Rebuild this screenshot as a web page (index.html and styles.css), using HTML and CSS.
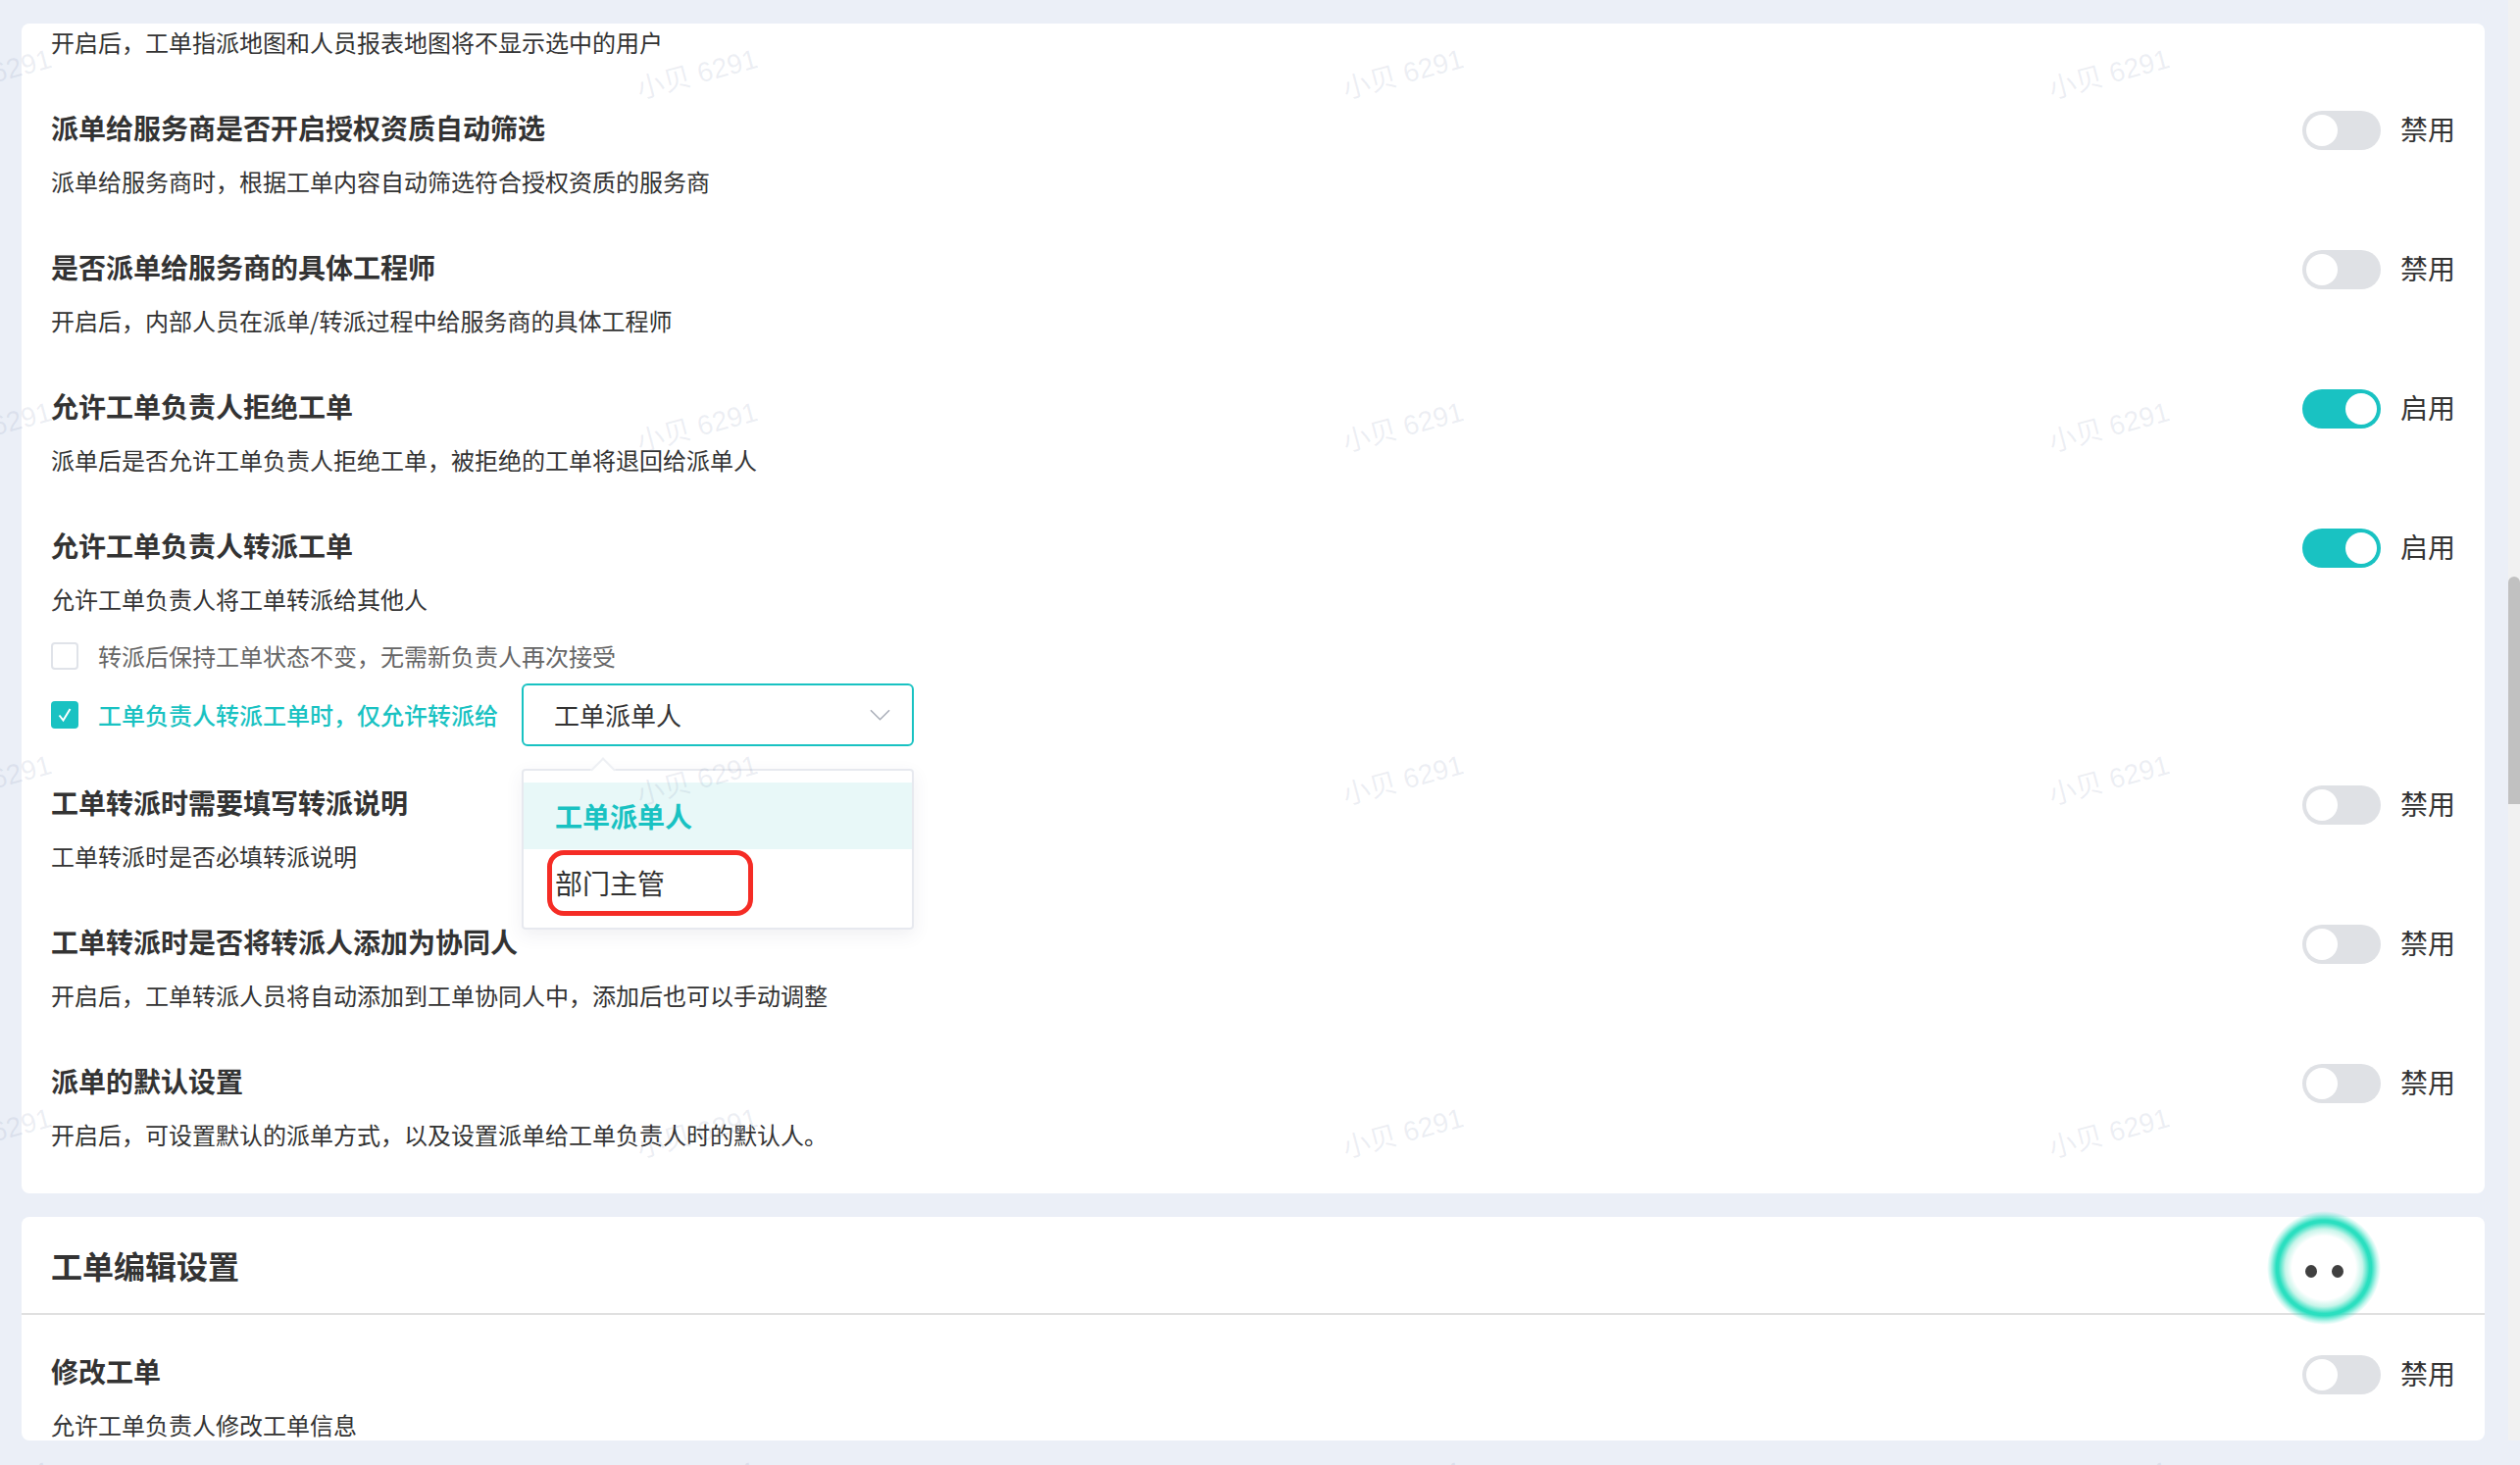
FILE: index.html
```html
<!DOCTYPE html>
<html lang="zh-CN">
<head>
<meta charset="utf-8">
<title>工单设置</title>
<link rel="stylesheet" href="styles.css">
</head>
<body>
<div class="page">
  <main class="content">
    <section class="card card-main">
      <p class="desc lead">开启后，工单指派地图和人员报表地图将不显示选中的用户</p>

      <div class="setting">
        <div class="setting-text">
          <h3 class="title">派单给服务商是否开启授权资质自动筛选</h3>
          <p class="desc">派单给服务商时，根据工单内容自动筛选符合授权资质的服务商</p>
        </div>
        <div class="control"><span class="toggle"></span><span class="state">禁用</span></div>
      </div>

      <div class="setting">
        <div class="setting-text">
          <h3 class="title">是否派单给服务商的具体工程师</h3>
          <p class="desc">开启后，内部人员在派单/转派过程中给服务商的具体工程师</p>
        </div>
        <div class="control"><span class="toggle"></span><span class="state">禁用</span></div>
      </div>

      <div class="setting">
        <div class="setting-text">
          <h3 class="title">允许工单负责人拒绝工单</h3>
          <p class="desc">派单后是否允许工单负责人拒绝工单，被拒绝的工单将退回给派单人</p>
        </div>
        <div class="control"><span class="toggle on"></span><span class="state">启用</span></div>
      </div>

      <div class="setting has-options">
        <div class="setting-text">
          <h3 class="title">允许工单负责人转派工单</h3>
          <p class="desc">允许工单负责人将工单转派给其他人</p>
          <div class="options">
            <div class="option">
              <span class="checkbox"></span>
              <span class="option-label">转派后保持工单状态不变，无需新负责人再次接受</span>
            </div>
            <div class="option option-active">
              <span class="checkbox checked">
                <svg class="check-icon" viewBox="0 0 28 28" aria-hidden="true"><path d="M8.5 14.5l4 5 7-11.5"/></svg>
              </span>
              <span class="option-label">工单负责人转派工单时，仅允许转派给</span>
              <div class="select">
                <span>工单派单人</span>
                <svg class="chevron" viewBox="0 0 22 12" aria-hidden="true"><path d="M1 1l10 10L21 1"/></svg>
                <div class="dropdown">
                  <span class="dropdown-arrow"></span>
                  <div class="dropdown-item selected">工单派单人</div>
                  <div class="dropdown-item">部门主管<span class="annotation"></span></div>
                </div>
              </div>
            </div>
          </div>
        </div>
        <div class="control"><span class="toggle on"></span><span class="state">启用</span></div>
      </div>

      <div class="setting">
        <div class="setting-text">
          <h3 class="title">工单转派时需要填写转派说明</h3>
          <p class="desc">工单转派时是否必填转派说明</p>
        </div>
        <div class="control"><span class="toggle"></span><span class="state">禁用</span></div>
      </div>

      <div class="setting">
        <div class="setting-text">
          <h3 class="title">工单转派时是否将转派人添加为协同人</h3>
          <p class="desc">开启后，工单转派人员将自动添加到工单协同人中，添加后也可以手动调整</p>
        </div>
        <div class="control"><span class="toggle"></span><span class="state">禁用</span></div>
      </div>

      <div class="setting last">
        <div class="setting-text">
          <h3 class="title">派单的默认设置</h3>
          <p class="desc">开启后，可设置默认的派单方式，以及设置派单给工单负责人时的默认人。</p>
        </div>
        <div class="control"><span class="toggle"></span><span class="state">禁用</span></div>
      </div>
    </section>

    <section class="card card-edit">
      <h2 class="section-title">工单编辑设置</h2>
      <div class="setting first">
        <div class="setting-text">
          <h3 class="title">修改工单</h3>
          <p class="desc">允许工单负责人修改工单信息</p>
        </div>
        <div class="control"><span class="toggle"></span><span class="state">禁用</span></div>
      </div>
    </section>
  </main>
  <div class="scrollbar"><div class="scrollbar-thumb"></div></div>
</div>

<div class="assistant"><span class="eye"></span><span class="eye"></span></div>

<div class="watermark-layer" aria-hidden="true">
  <div class="watermarks">
    <span class="wm">小贝 6291</span><span class="wm">小贝 6291</span><span class="wm">小贝 6291</span><span class="wm">小贝 6291</span>
    <span class="wm">小贝 6291</span><span class="wm">小贝 6291</span><span class="wm">小贝 6291</span><span class="wm">小贝 6291</span>
    <span class="wm">小贝 6291</span><span class="wm">小贝 6291</span><span class="wm">小贝 6291</span><span class="wm">小贝 6291</span>
    <span class="wm">小贝 6291</span><span class="wm">小贝 6291</span><span class="wm">小贝 6291</span><span class="wm">小贝 6291</span>
    <span class="wm">小贝 6291</span><span class="wm">小贝 6291</span><span class="wm">小贝 6291</span><span class="wm">小贝 6291</span>
  </div>
</div>
</body>
</html>
```
FILE: styles.css
```css
* { box-sizing: border-box; }

html, body {
  margin: 0;
  height: 1494px;
  overflow: hidden;
}

body {
  position: relative;
  background: #ebeff7;
  color: #333;
  font-family: "Noto Sans CJK SC", "Noto Sans", sans-serif;
}

h2, h3, p { margin: 0; }

.page {
  display: flex;
  height: 1469px;
}

.content {
  flex: 1;
  display: flex;
  flex-direction: column;
  gap: 24px;
  padding: 24px 24px 0 22px;
  min-width: 0;
}

.card {
  background: #fff;
  border-radius: 8px;
}

.card-main {
  height: 1193px;
  padding: 2px 30px 0;
}

.card-edit {
  height: 228px;
  overflow: hidden;
}

.lead { margin-bottom: 50px; }

.setting {
  display: flex;
  justify-content: space-between;
  align-items: flex-start;
  margin-bottom: 50px;
}

.setting.has-options { margin-bottom: 37px; }
.setting.last { margin-bottom: 0; }

.setting.first {
  padding: 37px 30px 0;
  margin-bottom: 0;
}

.title {
  font-size: 28px;
  line-height: 40px;
  font-weight: 700;
  color: #333;
}

.desc {
  font-size: 24px;
  line-height: 34px;
  font-weight: 400;
  color: #333;
}

.title + .desc { margin-top: 18px; }

.section-title {
  height: 100px;
  padding-left: 30px;
  border-bottom: 2px solid #e0e0e0;
  font-size: 32px;
  line-height: 98px;
  font-weight: 700;
  color: #333;
}

.control {
  display: flex;
  align-items: flex-start;
  gap: 20px;
  margin-top: 3px;
}

.setting.first .control { margin-top: 4px; }

.state {
  margin-top: -2px;
  font-size: 28px;
  line-height: 40px;
  color: #333;
}

.toggle {
  display: block;
  width: 80px;
  height: 40px;
  padding: 4px;
  border-radius: 20px;
  background: #dfe1e5;
}

.toggle::after {
  content: "";
  display: block;
  width: 32px;
  height: 32px;
  border-radius: 50%;
  background: #fff;
}

.toggle.on {
  padding-left: 44px;
  background: #19c2c2;
}

.options {
  display: flex;
  flex-direction: column;
  margin-top: 24px;
  gap: 11px;
}

.option {
  display: flex;
  align-items: center;
  font-size: 24px;
  line-height: 34px;
  color: #666;
}

.option-active {
  color: #19c2c2;
  font-weight: 500;
}

.checkbox {
  flex: none;
  width: 28px;
  height: 28px;
  margin-right: 20px;
  border: 2px solid #e0e3e9;
  border-radius: 4px;
  background: #fff;
}

.checkbox.checked {
  border: 0;
  background: #19c2c2;
}

.check-icon {
  display: block;
  width: 28px;
  height: 28px;
  fill: none;
  stroke: #fff;
  stroke-width: 2;
}

.select {
  position: relative;
  display: flex;
  justify-content: space-between;
  align-items: center;
  width: 400px;
  height: 64px;
  margin-left: 24px;
  padding: 0 22px 0 31px;
  border: 2px solid #19c2c2;
  border-radius: 6px;
  background: #fff;
  font-size: 26px;
  font-weight: 400;
  color: #333;
}

.chevron {
  width: 21px;
  height: 12px;
  fill: none;
  stroke: #a9aeb8;
  stroke-width: 1.6;
}

.dropdown {
  position: absolute;
  z-index: 5;
  left: -2px;
  top: 85px;
  width: 400px;
  height: 164px;
  padding: 12px 0;
  border: 2px solid #e7e9ef;
  border-radius: 4px;
  background: #fff;
  box-shadow: 0 6px 18px rgba(60, 70, 100, 0.08);
}

.dropdown-arrow {
  position: absolute;
  left: 72px;
  top: -10px;
  width: 18px;
  height: 18px;
  background: #fff;
  transform: rotate(45deg);
  border-top: 2px solid #eef0f4;
  border-left: 2px solid #eef0f4;
}

.dropdown-item {
  position: relative;
  height: 68px;
  padding-left: 32px;
  font-size: 28px;
  line-height: 68px;
  color: #333;
}

.dropdown-item.selected {
  background: #e8f8f8;
  color: #19c2c2;
  font-weight: 700;
}

.annotation {
  position: absolute;
  left: 24px;
  top: 1px;
  width: 210px;
  height: 67px;
  border: 5px solid #f52c25;
  border-radius: 17px;
}

.scrollbar {
  flex: none;
  width: 12px;
  height: 100%;
  padding-top: 588px;
  background: #f1f1f1;
}

.scrollbar-thumb {
  height: 232px;
  border-radius: 6px 6px 0 0;
  background: #c1c1c1;
}

.assistant {
  position: absolute;
  z-index: 6;
  left: 2312px;
  top: 1235px;
  width: 116px;
  height: 116px;
  display: flex;
  align-items: center;
  justify-content: center;
  gap: 15px;
  padding-top: 6px;
  border-radius: 50%;
  background: radial-gradient(circle closest-side, #fff 0, #fff 56%, #c8f5ea 68%, #2bdfc0 80%, #2bdfc0 84%, rgba(43, 223, 192, 0.3) 94%, rgba(43, 223, 192, 0) 100%);
}

.eye {
  width: 12px;
  height: 13px;
  border-radius: 50%;
  background: #404040;
}

.watermark-layer {
  position: absolute;
  z-index: 10;
  inset: 0;
  overflow: hidden;
  pointer-events: none;
}

.watermarks {
  display: grid;
  grid-template-columns: repeat(4, 720px);
  grid-auto-rows: 360px;
  margin: -104px 0 0 -369px;
}

.wm {
  align-self: center;
  justify-self: center;
  transform: rotate(-15deg);
  font-family: "Liberation Sans", "Noto Sans CJK SC", sans-serif;
  font-size: 28px;
  line-height: 30px;
  white-space: nowrap;
  color: rgba(110, 125, 160, 0.13);
}
```
